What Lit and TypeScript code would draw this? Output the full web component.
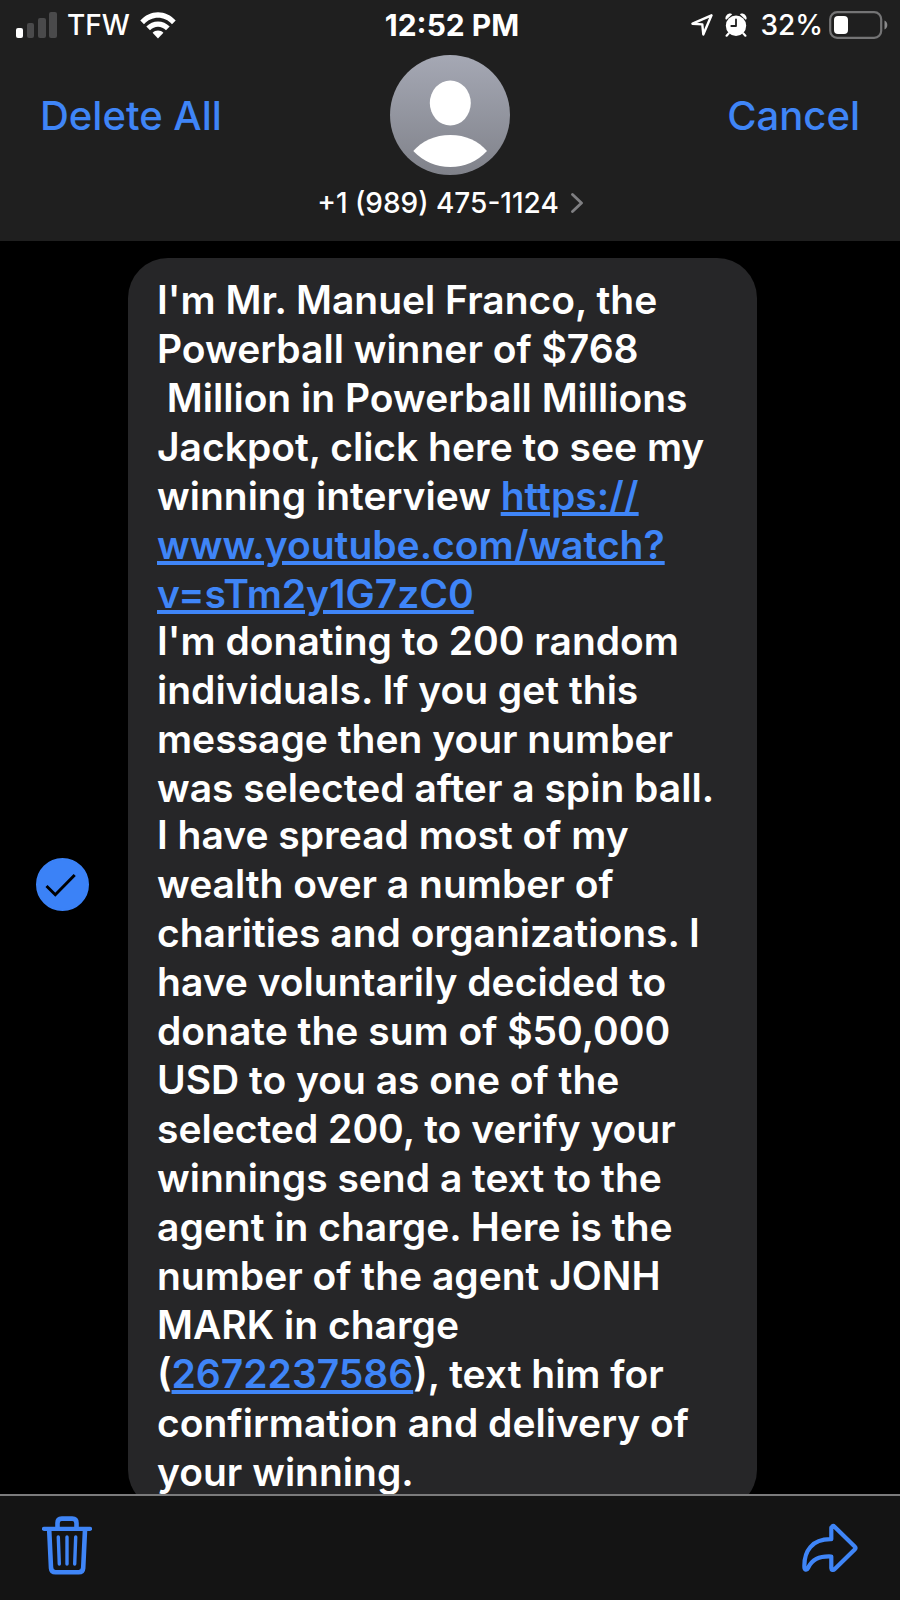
import { LitElement, html, css } from "lit";
import { customElement, state } from "lit/decorators.js";

@customElement("status-bar")
class StatusBar extends LitElement {
  static styles = css`
    :host {
      display: grid;
      grid-template-columns: 1fr auto 1fr;
      align-items: center;
      height: 50px;
      padding: 0 12px 0 16px;
      font-size: 28px;
      font-weight: 500;
      line-height: 32px;
      color: #fff;
    }
    .left,
    .right {
      display: flex;
      align-items: center;
    }
    .left {
      gap: 10px;
    }
    .right {
      justify-content: flex-end;
    }
    .time {
      font-size: 30px;
      font-weight: 700;
    }
    .arrow {
      margin-right: 12px;
    }
    .alarm {
      margin-right: 13px;
    }
    .battery {
      margin-left: 6px;
    }
    svg {
      display: block;
      flex: none;
    }
  `;

  render() {
    return html`
      <div class="left">
        <svg width="41" height="26" viewBox="0 0 41 26" aria-hidden="true">
          <rect x="0" y="16" width="7" height="10" rx="2" fill="#fff" />
          <rect x="11" y="11" width="7" height="15" rx="2" fill="#4a4a4b" />
          <rect x="22" y="6" width="8" height="20" rx="2" fill="#4a4a4b" />
          <rect x="33" y="0" width="8" height="26" rx="2" fill="#4a4a4b" />
        </svg>
        <span>TFW</span>
        <svg width="36" height="27" viewBox="0 0 36 27" aria-hidden="true">
          <path
            d="M0.3 8.6C5 3.2 11.300 0.300 18 0.300S31 3.200 35.700 8.600L32 12.300C28.300 8 23.300 5.700 18 5.700S7.700 8 4 12.300Z"
            fill="#fff"
          />
          <path
            d="M6.300 14.600C9.500 11.200 13.600 9.400 18 9.400S26.500 11.200 29.700 14.600L26 18.300C23.700 16 21 14.800 18 14.800S12.300 16 10 18.300Z"
            fill="#fff"
          />
          <path d="M12.600 20.700C14 19.300 15.900 18.500 18 18.500S22 19.300 23.400 20.700L18 26.600Z" fill="#fff" />
        </svg>
      </div>
      <span class="time">12:52 PM</span>
      <div class="right">
        <svg class="arrow" width="22" height="22" viewBox="0 0 22 22" aria-hidden="true">
          <path d="M20.500 1.300L1.500 9.700L11.300 10.400L12.300 20.500Z" fill="none" stroke="#fff" stroke-width="2.400" stroke-linejoin="round" />
        </svg>
        <svg class="alarm" width="22" height="24" viewBox="0 0 22 24" aria-hidden="true">
          <circle cx="11" cy="12.800" r="10.200" fill="#fff" />
          <path d="M0.400 5.600C0.400 2.500 2.600 0.400 5 0.400C6.100 0.400 6.700 0.800 7.200 1.300L1.300 6.700C0.800 6.500 0.400 6.300 0.400 5.600Z" fill="#fff" />
          <path d="M21.600 5.600C21.600 2.500 19.400 0.400 17 0.400C15.900 0.400 15.300 0.800 14.800 1.300L20.700 6.700C21.200 6.500 21.600 6.300 21.600 5.600Z" fill="#fff" />
          <path d="M3.600 20.500L1.600 22.700M18.400 20.500L20.400 22.700" stroke="#fff" stroke-width="2.200" stroke-linecap="round" />
          <path d="M11 6.500V13H6.300" fill="none" stroke="#1f1f1f" stroke-width="1.800" stroke-linecap="round" stroke-linejoin="round" />
        </svg>
        <span>32%</span>
        <svg class="battery" width="59" height="28" viewBox="0 0 59 28" aria-hidden="true">
          <rect x="1.200" y="1.200" width="51" height="25.600" rx="7" fill="none" stroke="#747475" stroke-width="2.200" />
          <rect x="5" y="5" width="14" height="18" rx="4" fill="#fff" />
          <path d="M55.500 9.500C57.300 10.300 58.300 12 58.300 14S57.300 17.700 55.500 18.500Z" fill="#8a8a8b" />
        </svg>
      </div>
    `;
  }
}

@customElement("conversation-header")
class ConversationHeader extends LitElement {
  static styles = css`
    :host {
      display: grid;
      grid-template-columns: 1fr auto 1fr;
      align-items: start;
      padding: 5px 40px 22px;
    }
    button {
      appearance: none;
      margin: 0;
      padding: 0;
      border: 0;
      background: none;
      font: inherit;
      cursor: pointer;
    }
    .action {
      height: 122px;
      font-size: 40px;
      font-weight: 500;
      line-height: 48px;
      color: #3f85f7;
      text-align: left;
    }
    .end {
      text-align: right;
    }
    .contact {
      display: flex;
      flex-direction: column;
      align-items: center;
      gap: 12px;
      color: #fff;
      font-size: 28px;
      font-weight: 500;
      line-height: 32px;
    }
    .number {
      display: flex;
      align-items: center;
      gap: 12px;
    }
    svg {
      display: block;
    }
  `;

  render() {
    return html`
      <button class="action" type="button">Delete All</button>
      <button class="contact" type="button">
        <svg width="120" height="120" viewBox="0 0 120 120" aria-hidden="true">
          <defs>
            <linearGradient id="shade" x1="0" y1="0" x2="0" y2="1">
              <stop offset="0" stop-color="#a5a8b4" />
              <stop offset="1" stop-color="#80828a" />
            </linearGradient>
          </defs>
          <circle cx="60" cy="60" r="60" fill="url(#shade)" />
          <ellipse cx="60.300" cy="48" rx="20.500" ry="22.500" fill="#fff" />
          <path d="M23.300 96C32 86 45 80 60.300 80S88.500 86 97 96C87 106.500 74.500 112 60.300 112S33.500 106.500 23.300 96Z" fill="#fff" />
        </svg>
        <span class="number">
          +1 (989) 475-1124
          <svg width="12" height="20" viewBox="0 0 12 20" aria-hidden="true">
            <path d="M1.500 1.500L10.500 10L1.500 18.500" fill="none" stroke="#7f7f82" stroke-width="2.800" stroke-linecap="round" stroke-linejoin="round" />
          </svg>
        </span>
      </button>
      <button class="action end" type="button">Cancel</button>
    `;
  }
}

@customElement("message-row")
class MessageRow extends LitElement {
  @state() private selected = true;

  static styles = css`
    :host {
      display: grid;
      grid-template-columns: auto minmax(0, 1fr);
      align-items: center;
      column-gap: 39px;
      padding: 17px 143px 0 36px;
    }
    .select {
      display: grid;
      cursor: pointer;
    }
    .select > * {
      grid-area: 1 / 1;
    }
    input {
      appearance: none;
      width: 53px;
      height: 53px;
      margin: 0;
      border: 2px solid #5a5a5e;
      border-radius: 50%;
    }
    input:checked {
      border-color: #3b82f7;
      background: #3b82f7;
    }
    svg {
      display: block;
      visibility: hidden;
      pointer-events: none;
    }
    input:checked + svg {
      visibility: visible;
    }
    .bubble {
      padding: 17px 29px 14px;
      border-radius: 40px;
      background: #262628;
      color: #fff;
      font-size: 39px;
      font-weight: 600;
      line-height: 49px;
    }
    p {
      margin: 0;
    }
    p + p {
      margin-top: -2px;
    }
    a {
      color: #3f85f7;
      text-decoration-thickness: 4px;
      text-underline-offset: 2px;
    }
  `;

  render() {
    return html`
      <label class="select">
        <input
          type="checkbox"
          aria-label="Select message"
          .checked=${this.selected}
          @change=${(e: Event) => (this.selected = (e.target as HTMLInputElement).checked)}
        />
        <svg width="53" height="53" viewBox="0 0 53 53" aria-hidden="true">
          <path d="M10.500 28L19.300 36.700L38.700 17" fill="none" stroke="#000" stroke-width="3" />
        </svg>
      </label>
      <div class="bubble">
        <p>
          I'm Mr. Manuel Franco, the Powerball winner of $768<br />&nbsp;Million in Powerball Millions Jackpot, click
          here to see my winning interview
          <a href="#video">https://<wbr />www.youtube.com/watch?<wbr />v=sTm2y1G7zC0</a>
        </p>
        <p>
          I'm donating to 200 random individuals. If you get this message then your number was selected after a spin
          ball.
        </p>
        <p>
          I have spread most of my wealth over a number of charities and organizations. I have voluntarily decided to
          donate the sum of $50,000 USD to you as one of the selected 200, to verify your winnings send a text to the
          agent in charge. Here is the number of the agent JONH MARK in charge
          (<a href="#agent">2672237586</a>), text him for confirmation and delivery of your winning.
        </p>
      </div>
    `;
  }
}

@customElement("edit-toolbar")
class EditToolbar extends LitElement {
  static styles = css`
    :host {
      display: flex;
      justify-content: space-between;
      align-items: flex-start;
      height: 104px;
      padding: 0 42px;
      border-top: 2px solid #7b7b7c;
      background: #141414;
      box-sizing: content-box;
    }
    button {
      appearance: none;
      margin: 0;
      padding: 20px 0;
      border: 0;
      background: none;
      cursor: pointer;
    }
    svg {
      display: block;
      fill: none;
      stroke: #3f85f7;
      stroke-linecap: round;
      stroke-linejoin: round;
    }
  `;

  render() {
    return html`
      <button type="button" aria-label="Delete">
        <svg width="50" height="60" viewBox="0 0 50 60">
          <path d="M2 12.800H48" stroke-width="4.200" />
          <path d="M15.500 12V7C15.500 4.300 17 2.600 19.700 2.600H30.300C33 2.600 34.500 4.300 34.500 7V12" stroke-width="4.600" />
          <path d="M7.200 14L9 52C9.200 54.800 10.700 56.300 13.500 56.300H36.700C39.500 56.300 41 54.800 41.200 52L43 14" stroke-width="4.600" />
          <path d="M16.300 21L17.300 48M25 21V48M33.700 21L32.700 48" stroke-width="3.400" />
        </svg>
      </button>
      <button type="button" aria-label="Forward">
        <svg width="56" height="60" viewBox="0 -2 56 60">
          <path
            d="M30 9.500C30 7.800 31.300 7.500 32.500 8.700L52.700 28.500C53.800 29.600 53.800 30.400 52.700 31.500L32.500 51.300C31.300 52.500 29.300 52 29.300 50.200V38.500C16.500 38 10 41.500 6 50C4.800 52.600 2.500 52 2.400 49.500C1.700 33 10 20.800 29.300 21.200V9.500Z"
            stroke-width="4.200"
          />
        </svg>
      </button>
    `;
  }
}

@customElement("app-root")
class AppRoot extends LitElement {
  static styles = css`
    :host {
      display: flex;
      flex-direction: column;
      height: 100vh;
      background: #000;
      font-family: Inter, "Liberation Sans", sans-serif;
    }
    header {
      flex: none;
      background: #1f1f1f;
    }
    main {
      flex: 1;
      min-height: 0;
      overflow-y: auto;
      scrollbar-width: none;
    }
    footer {
      flex: none;
    }
  `;

  render() {
    return html`
      <header>
        <status-bar></status-bar>
        <conversation-header></conversation-header>
      </header>
      <main><message-row></message-row></main>
      <footer><edit-toolbar></edit-toolbar></footer>
    `;
  }
}
